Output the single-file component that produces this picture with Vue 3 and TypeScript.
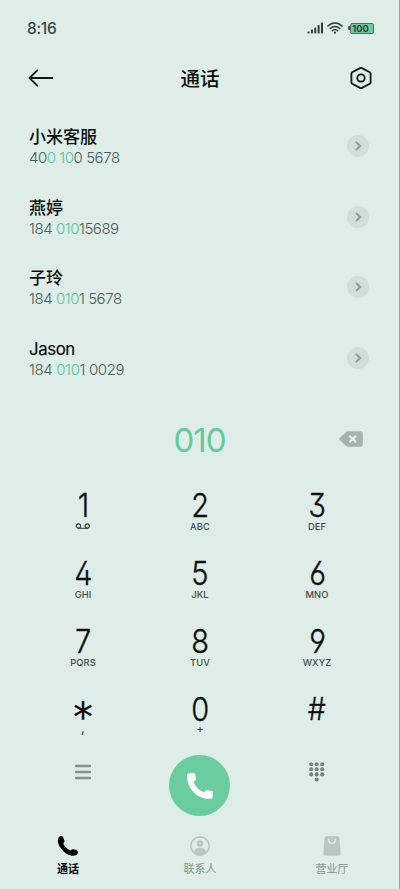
<script setup lang="ts">
interface Part { t: string; hit?: boolean }
interface Contact { name: string; latin?: boolean; cls: string; parts: Part[] }
interface Key { d: string; sub: string; cls?: string }

const contacts: Contact[] = [
  { name: '小米客服', cls: 'n1', parts: [{ t: '40' }, { t: '0 10', hit: true }, { t: '0 5678' }] },
  { name: '燕婷', cls: 'n2', parts: [{ t: '184 ' }, { t: '010', hit: true }, { t: '15689' }] },
  { name: '子玲', cls: 'n3', parts: [{ t: '184 ' }, { t: '010', hit: true }, { t: '1 5678' }] },
  { name: 'Jason', latin: true, cls: 'n4', parts: [{ t: '184 ' }, { t: '010', hit: true }, { t: '1 0029' }] },
]

const keys: Key[] = [
  { d: '1', sub: '' }, { d: '2', sub: 'ABC' }, { d: '3', sub: 'DEF' },
  { d: '4', sub: 'GHI' }, { d: '5', sub: 'JKL' }, { d: '6', sub: 'MNO' },
  { d: '7', sub: 'PQRS' }, { d: '8', sub: 'TUV' }, { d: '9', sub: 'WXYZ' },
  { d: '*', sub: ',', cls: 'star' }, { d: '0', sub: '+', cls: 'zero' }, { d: '#', sub: '', cls: 'hash' },
]

const dots: [number, number][] = []
for (let r = 0; r < 3; r++) for (let c = 0; c < 3; c++) dots.push([2.2 + c * 5.5, 2.2 + r * 5.1])
dots.push([7.7, 17.5])
</script>

<template>
  <main class="phone">
    <div class="status">
      <span class="time">8:16</span>
      <svg class="signal" width="17" height="12" viewBox="0 0 17 12">
        <g fill="#303c38">
          <rect x="0.5" y="9.4" width="2" height="2" rx=".6" /><rect x="4" y="7.6" width="2" height="3.8" rx=".6" />
          <rect x="7.2" y="5.4" width="2" height="6" rx=".6" /><rect x="10.6" y="3" width="2" height="8.4" rx=".6" />
          <rect x="14" y="0.6" width="2" height="10.8" rx=".6" />
        </g>
      </svg>
      <svg class="wifi" width="16" height="12" viewBox="0 0 16 12" fill="none" stroke="#303c38" stroke-width="1.5" stroke-linecap="round">
        <path d="M1 4.1C5-.1 11-.1 15 4.1M3.2 6.5C6 3.7 10 3.7 12.8 6.5M5.3 8.7C6.9 7.2 9.1 7.2 10.7 8.7" />
        <circle cx="8" cy="10.7" r="1.1" fill="#303c38" stroke="none" />
      </svg>
      <span class="nub"></span><span class="battery">100</span>
    </div>

    <header class="head">
      <svg width="26" height="20" viewBox="0 0 26 20" fill="none" stroke="#101614" stroke-width="1.8" stroke-linecap="round" stroke-linejoin="round">
        <path d="M24.3 10H1.5M9.3 2.3L1.5 10L9.3 17.7" />
      </svg>
      <h1>通话</h1>
      <svg width="22" height="24" viewBox="0 0 22 24" fill="none" stroke="#101614" stroke-width="1.8" stroke-linejoin="round">
        <path d="M10 2.1Q11 1.6 12 2.1L19.8 6.2Q20.6 6.7 20.6 7.6V16.4Q20.6 17.3 19.8 17.8L12 21.9Q11 22.4 10 21.9L2.2 17.8Q1.4 17.3 1.4 16.4V7.6Q1.4 6.7 2.2 6.2Z" />
        <circle cx="11" cy="12" r="3.7" />
      </svg>
    </header>

    <section class="list">
      <div v-for="c in contacts" :key="c.name" class="row">
        <div class="info">
          <div class="name" :class="{ latin: c.latin }">{{ c.name }}</div>
          <div class="number" :class="c.cls"><span v-for="(p, i) in c.parts" :key="i" :class="{ hit: p.hit }">{{ p.t }}</span></div>
        </div>
        <span class="go">
          <svg width="22" height="22" viewBox="0 0 22 22" fill="none" stroke="#8d9c96" stroke-width="2"><path d="M9 7.1L13.2 11L9 14.9" /></svg>
        </span>
      </div>
    </section>

    <div class="entry">
      <span class="typed">010</span>
      <svg class="erase" width="24" height="16" viewBox="0 0 24 16">
        <path d="M7.2.9Q8 .2 9 .2H21.5Q23.8.2 23.8 2.5V13.5Q23.8 15.8 21.5 15.8H9Q8 15.8 7.2 15.1L.7 9Q-.3 8 .7 7Z" fill="#a5b3ad" />
        <path d="M10.4 4.7L17 11.3M17 4.7L10.4 11.3" stroke="#e6f2ed" stroke-width="2" />
      </svg>
    </div>

    <section class="pad">
      <div v-for="k in keys" :key="k.d" class="key" :class="k.cls">
        <span class="digit">{{ k.d }}</span>
        <svg v-if="k.d === '1'" class="vm" width="16" height="7" viewBox="0 0 16 7" fill="none" stroke="#35413c" stroke-width="1.1">
          <circle cx="3.5" cy="3" r="2.1" /><circle cx="12.2" cy="3" r="2.1" /><path d="M3 5.3H12.7" />
        </svg>
        <span v-else-if="k.sub" class="sub">{{ k.sub }}</span>
      </div>
    </section>

    <section class="actions">
      <div class="cell">
        <svg class="menu" width="18" height="16" viewBox="0 0 18 16" stroke="#82918b" stroke-width="2.3" stroke-linecap="round">
          <path d="M2 2H16M2 8H16M2 14H16" />
        </svg>
      </div>
      <div class="cell">
        <span class="call">
          <svg width="28" height="28" viewBox="0 0 28 28">
            <path d="M2.3 1.6L7.6 1Q8.8 1 9.2 2.2L10 7.1Q10.1 8.2 9 8.7L7.8 9.5C8.6 14.2 13.2 18.8 18.4 20.2L19.3 19Q20 18.1 21.1 18.3L25.9 19Q27 19.3 27 20.5L26.5 25.5Q26.3 26.8 25 26.8C12 27.7.8 17 1 3.2Q1.1 1.8 2.3 1.6Z" fill="#fff" />
          </svg>
        </span>
      </div>
      <div class="cell">
        <svg class="dots" width="16" height="20" viewBox="0 0 16 20" fill="#74857e">
          <circle v-for="(p, i) in dots" :key="i" :cx="p[0]" :cy="p[1]" r="2.05" />
        </svg>
      </div>
    </section>

    <nav class="tabs">
      <div class="tab on">
        <svg width="22" height="22" viewBox="0 0 22 22">
          <path d="M1.7 2.5C3.2.6 5.7.6 6.4 2.7L7.4 5.7C7.7 7 6.6 7.8 6.3 8.7C7.2 11 10.5 14.4 13.2 15.2C14.2 15.2 14.8 13.9 16.3 14.2L19.3 15.1C21.6 15.9 21.3 18.7 19.4 20C14.7 22.5 8.7 18.7 5.4 15.2C2.7 12.3-.7 6.7 1.7 2.5Z" fill="#000" />
        </svg>
        <span>通话</span>
      </div>
      <div class="tab">
        <svg width="22" height="22" viewBox="0 0 22 22">
          <circle cx="11" cy="11" r="9.2" fill="none" stroke="#bac8c2" stroke-width="1.7" />
          <circle cx="11" cy="8.4" r="3.2" fill="#bac8c2" />
          <path d="M4.3 16.5C6 13.5 8.5 12.8 11 12.8S16 13.5 17.7 16.5C16 19 13.5 19.9 11 19.9S6 19 4.3 16.5Z" fill="#bac8c2" />
        </svg>
        <span>联系人</span>
      </div>
      <div class="tab">
        <svg width="22" height="22" viewBox="0 0 22 22">
          <path d="M5.3 1.2H16.7Q18.5 1.2 18.6 3L19.5 18Q19.6 20.8 17 20.8H5Q2.4 20.8 2.5 18L3.4 3Q3.5 1.2 5.3 1.2Z" fill="#bac8c2" />
          <path d="M7.7 4.7C7.9 9.5 14.1 9.5 14.3 4.7" fill="none" stroke="#deeee8" stroke-width="1.5" stroke-linecap="round" />
        </svg>
        <span>营业厅</span>
      </div>
    </nav>
  </main>
</template>

<style>
body { margin: 0; background: #deede7; }
</style>

<style scoped>
.phone {
  box-sizing: border-box; width: 400px; height: 889px; overflow: hidden;
  display: flex; flex-direction: column;
  background: #deede7; border-right: 1px solid #94a5a0;
  color: #0b100e; font-family: Inter, "Noto Sans CJK SC", sans-serif;
}
svg { display: block; flex: none; }
.status { display: flex; align-items: center; height: 56px; padding: 0 25px 0 27px; }
.time { margin-right: auto; font-size: 15.5px; font-weight: 500; letter-spacing: -.3px; color: #3c4844; }
.signal { margin-right: 3px; }
.wifi { margin-right: 5px; }
.nub { width: 2px; height: 4px; background: #46574f; border-radius: 1px 0 0 1px; }
.battery {
  box-sizing: border-box; width: 24px; height: 11px; padding-right: 3px; border: 1px solid #526b60; border-radius: 2px;
  background: #6fc9a0; color: #22382e; font-size: 9.5px; line-height: 9px; font-weight: 600; text-align: center;
}
.head { display: grid; grid-template-columns: 1fr auto 1fr; align-items: center; height: 44px; padding: 0 27px 0 28px; }
.head svg:last-child { justify-self: end; }
h1 { margin: 2px 0 0; font-size: 19.5px; line-height: 30px; font-weight: 500; }
.list { padding: 11px 30px 0 29px; }
.row { display: flex; align-items: center; justify-content: space-between; height: 70.5px; }
.info { padding-top: 2px; }
.name { font-size: 17px; line-height: 22px; font-weight: 500; white-space: nowrap; }
.name.latin { font-size: 16.8px; font-weight: 400; letter-spacing: -.4px; -webkit-text-stroke: .2px #0b100e; }
.number { font-size: 15px; line-height: 20px; font-weight: 300; color: #4d5b56; white-space: pre; letter-spacing: -.46px; }
.number.n4 { letter-spacing: -.38px; }
.hit { color: #58c79a; }
.go { width: 22px; height: 22px; border-radius: 50%; background: #d0dfd8; }
.entry { display: grid; grid-template-columns: 1fr auto 1fr; align-items: center; height: 60px; margin-top: 16px; }
.typed { grid-column: 2; padding-top: 2px; font-size: 33px; line-height: 40px; color: #65c99e; letter-spacing: -1px; }
.erase { justify-self: end; margin-right: 36px; }
.pad { display: grid; grid-template-columns: repeat(3, 117px); grid-auto-rows: 68px; justify-content: center; margin-top: 17px; padding-left: 1px; }
.key { display: flex; flex-direction: column; align-items: center; padding-top: 3px; }
.digit {
  height: 32px; font-size: 33px; line-height: 33px; font-weight: 300;
  font-feature-settings: "ss01", "cv03", "cv04"; transform: scaleX(.88); -webkit-text-stroke: .35px #0b100e;
}
.star .digit { font-size: 46px; line-height: 50px; transform: none; -webkit-text-stroke-width: 0; }
.hash .digit { font-size: 31px; transform: none; line-height: 32px; transform: scaleX(.92); }
.sub { font-size: 9.3px; line-height: 11px; font-weight: 500; color: #3f4b46; letter-spacing: .1px; }
.star .sub { font-size: 12px; line-height: 8px; font-weight: 600; }
.zero .sub { font-size: 10.5px; line-height: 10px; }
.vm { margin-top: 2px; }
.actions { display: grid; grid-template-columns: repeat(3, 117px); justify-content: center; height: 62px; margin-top: -3px; }
.cell { display: flex; justify-content: center; align-items: flex-start; }
.menu { margin-top: 9px; }
.dots { margin-top: 7px; }
.call { display: grid; place-items: center; width: 61px; height: 61px; border-radius: 50%; background: #6bcd9f; }
.tabs { display: grid; grid-template-columns: repeat(3, 132px); justify-content: center; margin-top: 18px; padding-left: 1px; }
.tab { display: flex; flex-direction: column; align-items: center; font-size: 11px; line-height: 16px; color: #84938d; }
.tab span { margin-top: 3.5px; }
.tab.on { color: #000; font-weight: 600; }
</style>
